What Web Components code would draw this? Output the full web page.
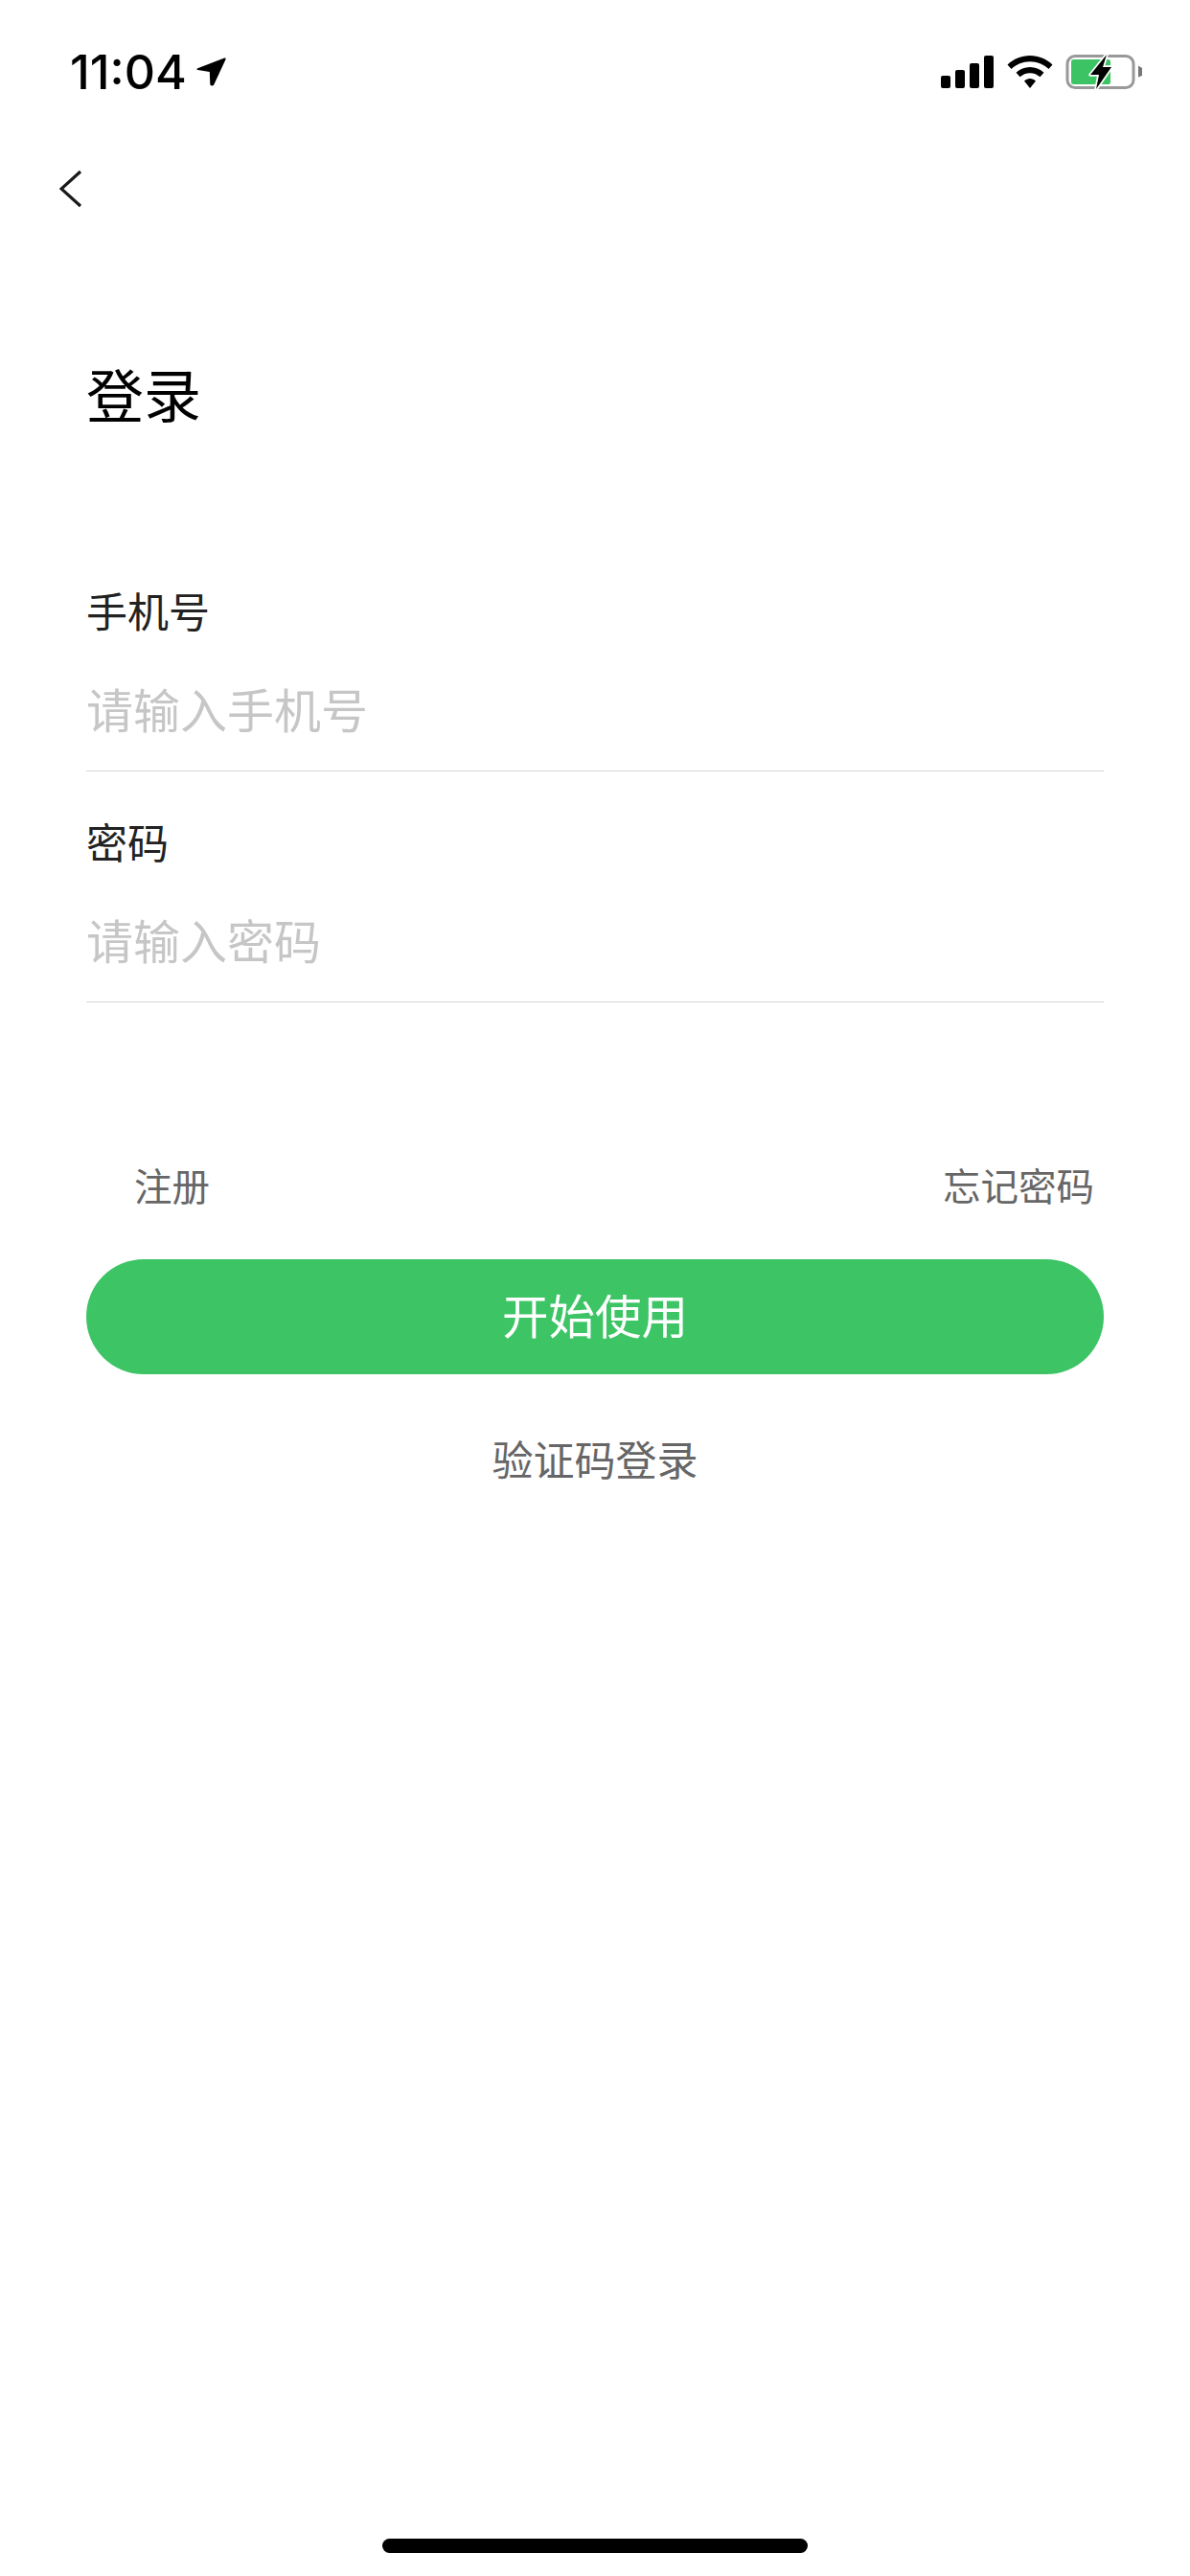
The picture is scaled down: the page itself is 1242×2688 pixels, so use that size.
<!DOCTYPE html>
<html lang="zh">
<head>
<meta charset="utf-8">
<title>登录</title>
<style>
  html, body { margin: 0; background: #fff; }
  body { font-family: "Noto Sans CJK SC", "Liberation Sans", sans-serif; }
</style>
</head>
<body>
<login-page>
  <status-bar slot="top" time="11:04"></status-bar>
  <back-nav slot="top"></back-nav>
  <login-title>登录</login-title>
  <form-field label="手机号" placeholder="请输入手机号"></form-field>
  <form-field label="密码" placeholder="请输入密码"></form-field>
  <link-row>
    <span slot="start">注册</span>
    <span slot="end">忘记密码</span>
  </link-row>
  <primary-button>开始使用</primary-button>
  <alt-link>验证码登录</alt-link>
  <home-indicator slot="bottom"></home-indicator>
</login-page>

<script>
class LoginPage extends HTMLElement {
  constructor() {
    super();
    this.attachShadow({ mode: "open" }).innerHTML = `
      <style>
        :host { display: flex; flex-direction: column; height: 2688px; background: #fff; }
        main { display: flex; flex-direction: column; padding: 0 90px; }
        .bottom { margin-top: auto; }
      </style>
      <slot name="top"></slot>
      <main><slot></slot></main>
      <div class="bottom"><slot name="bottom"></slot></div>
    `;
  }
}

class StatusBar extends HTMLElement {
  constructor() {
    super();
    this.attachShadow({ mode: "open" }).innerHTML = `
      <style>
        :host { display: flex; height: 150px; align-items: center; justify-content: space-between; padding: 0 50px 0 73px; }
        .left { display: flex; align-items: center; gap: 10px; }
        .time { font: 500 50px/60px Inter, "Liberation Sans", sans-serif; color: #000; }
        .right { display: flex; align-items: center; gap: 13px; }
        svg { display: block; }
      </style>
      <div class="left">
        <span class="time"></span>
        <svg width="31" height="30" viewBox="0 0 31 30"><path d="M29.300 0.600 1.300 11.200C0.200 11.700 0.400 13 1.500 13.100L13.800 15 14.300 28C14.400 29.600 17.300 30 18.200 28.400L30.500 2C30.900 1 30.300 0.300 29.300 0.600Z" fill="#000"/></svg>
      </div>
      <div class="right">
        <svg width="56" height="34" viewBox="0 0 56 34" fill="#000">
          <rect x="0" y="21" width="10" height="13" rx="2"/>
          <rect x="15" y="15" width="10" height="19" rx="2"/>
          <rect x="30" y="8" width="10" height="26" rx="2"/>
          <rect x="45" y="0" width="10" height="34" rx="2"/>
        </svg>
        <svg width="48" height="34" viewBox="0 0 48 34" fill="#000">
          <path d="M24 0C15 0 7 3.500 0.500 9.500L4.500 14C9.700 9.100 16.500 6.200 24 6.200S38.300 9.100 43.500 14L47.500 9.500C41 3.500 33 0 24 0Z"/>
          <path d="M24 12C18.500 12 13.500 14.200 9.500 17.800L13.500 22.300C16.300 19.800 20 18.200 24 18.200S31.700 19.800 34.500 22.300L38.500 17.800C34.500 14.200 29.500 12 24 12Z"/>
          <path d="M24 24C21.700 24 19.600 24.900 18 26.400L24 34 30 26.400C28.400 24.900 26.300 24 24 24Z"/>
        </svg>
        <svg width="80" height="36" viewBox="0 0 80 36">
          <rect x="2" y="1.500" width="69" height="33" rx="8" fill="none" stroke="#999" stroke-width="3"/>
          <rect x="6" y="5" width="41" height="26" rx="2.500" fill="#3cc464"/>
          <path d="M76 11.500 80 14V22L76 23.500Z" fill="#777"/>
          <path d="M43 0 26 21H35L32 36 48 13H39Z" fill="#000" stroke="#fff" stroke-width="3.500" paint-order="stroke" stroke-linejoin="round"/>
        </svg>
      </div>
    `;
    this.shadowRoot.querySelector(".time").textContent = this.getAttribute("time");
  }
}

class BackNav extends HTMLElement {
  constructor() {
    super();
    this.attachShadow({ mode: "open" }).innerHTML = `
      <style>
        :host { display: flex; height: 94px; align-items: center; padding-left: 62px; }
        svg { display: block; }
      </style>
      <svg width="24" height="40" viewBox="0 0 24 40"><path d="M22 2 2 20 22 38" fill="none" stroke="#1a1a1a" stroke-width="3.200"/></svg>
    `;
  }
}

class LoginTitle extends HTMLElement {
  constructor() {
    super();
    this.attachShadow({ mode: "open" }).innerHTML = `
      <style>
        :host { display: block; margin-top: 126px; font-size: 60px; line-height: 80px; color: #000; }
      </style>
      <slot></slot>
    `;
  }
}

class FormField extends HTMLElement {
  constructor() {
    super();
    this.attachShadow({ mode: "open" }).innerHTML = `
      <style>
        :host { display: block; padding-bottom: 35px; border-bottom: 1px solid #d6d6d6; margin-bottom: 42px; }
        .label { font-size: 43px; line-height: 60px; color: #222; }
        .placeholder { margin-top: 43px; font-size: 49px; line-height: 60px; color: #c6c6c6; }
      </style>
      <div class="label"></div>
      <div class="placeholder"></div>
    `;
    this.shadowRoot.querySelector(".label").textContent = this.getAttribute("label");
    this.shadowRoot.querySelector(".placeholder").textContent = this.getAttribute("placeholder");
  }
  connectedCallback() {
    if (!this.previousElementSibling || this.previousElementSibling.tagName !== "FORM-FIELD") {
      this.style.marginTop = "156px";
    }
  }
}

class LinkRow extends HTMLElement {
  constructor() {
    super();
    this.attachShadow({ mode: "open" }).innerHTML = `
      <style>
        :host { display: flex; justify-content: space-between; margin-top: 118px; padding: 0 10px 0 50px; font-size: 39.500px; line-height: 60px; color: #666; }
      </style>
      <slot name="start"></slot>
      <slot name="end"></slot>
    `;
  }
}

class PrimaryButton extends HTMLElement {
  constructor() {
    super();
    this.attachShadow({ mode: "open" }).innerHTML = `
      <style>
        :host { display: flex; align-items: center; justify-content: center; box-sizing: border-box; height: 120px; margin-top: 48px; padding-bottom: 6px; border-radius: 60px; background: #3dc465; color: #fff; font-size: 48.500px; }
      </style>
      <slot></slot>
    `;
  }
}

class AltLink extends HTMLElement {
  constructor() {
    super();
    this.attachShadow({ mode: "open" }).innerHTML = `
      <style>
        :host { display: block; margin-top: 57px; text-align: center; font-size: 43px; line-height: 60px; color: #666; }
      </style>
      <slot></slot>
    `;
  }
}

class HomeIndicator extends HTMLElement {
  constructor() {
    super();
    this.attachShadow({ mode: "open" }).innerHTML = `
      <style>
        :host { display: flex; justify-content: center; padding-bottom: 24px; }
        div { width: 444px; height: 15px; border-radius: 8px; background: #000; }
      </style>
      <div></div>
    `;
  }
}

customElements.define("login-page", LoginPage);
customElements.define("status-bar", StatusBar);
customElements.define("back-nav", BackNav);
customElements.define("login-title", LoginTitle);
customElements.define("form-field", FormField);
customElements.define("link-row", LinkRow);
customElements.define("primary-button", PrimaryButton);
customElements.define("alt-link", AltLink);
customElements.define("home-indicator", HomeIndicator);
</script>
</body>
</html>
